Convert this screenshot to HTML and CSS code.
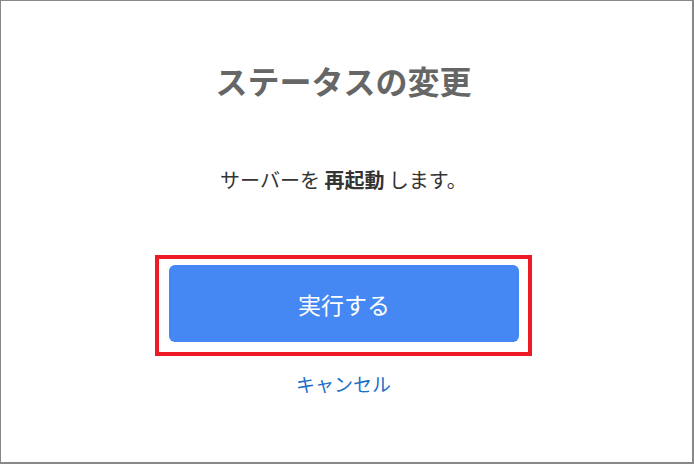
FILE: index.html
```html
<!DOCTYPE html>
<html lang="ja">
<head>
    <meta charset="UTF-8">
    <meta name="viewport" content="width=device-width, initial-scale=1.0">
    <title>ステータスの変更</title>
    <link rel="stylesheet" href="styles.css">
</head>
<body>
    <div class="dialog">
        <h1 class="dialog-title">ステータスの変更</h1>
        <p class="dialog-message">サーバーを <strong>再起動</strong> します。</p>
        <div class="highlight">
            <button class="run-button">実行する</button>
        </div>
        <a class="cancel-link" href="#">キャンセル</a>
    </div>
</body>
</html>
```

FILE: styles.css
```css
body {
    margin: 0;
    font-family: "Noto Sans CJK JP", "Noto Sans", sans-serif;
    background-color: #ffffff;
}
.dialog {
    box-sizing: border-box;
    width: 694px;
    height: 464px;
    border-style: solid;
    border-color: #888888;
    border-width: 1px 2px 2px 1px;
    padding: 0 6px 0 0;
    display: flex;
    flex-direction: column;
    align-items: center;
}
.dialog-title {
    margin: 55px 0 0;
    font-size: 32px;
    line-height: 48px;
    font-weight: bold;
    color: #666666;
}
.dialog-message {
    margin: 62px 0 0;
    font-size: 20px;
    line-height: 28px;
    color: #333333;
}
.dialog-message strong {
    font-weight: bold;
}
.highlight {
    margin-top: 61px;
    border: 4px solid #ed1c24;
    padding: 6px 9px 10px 10px;
}
.run-button {
    display: block;
    width: 350px;
    height: 77px;
    border: none;
    border-radius: 6px;
    background-color: #4587f3;
    color: #ffffff;
    font-family: inherit;
    font-size: 23px;
    cursor: pointer;
}
.cancel-link {
    margin-top: 14px;
    font-size: 19px;
    line-height: 28px;
    color: #1a6fc9;
    text-decoration: none;
}
```
